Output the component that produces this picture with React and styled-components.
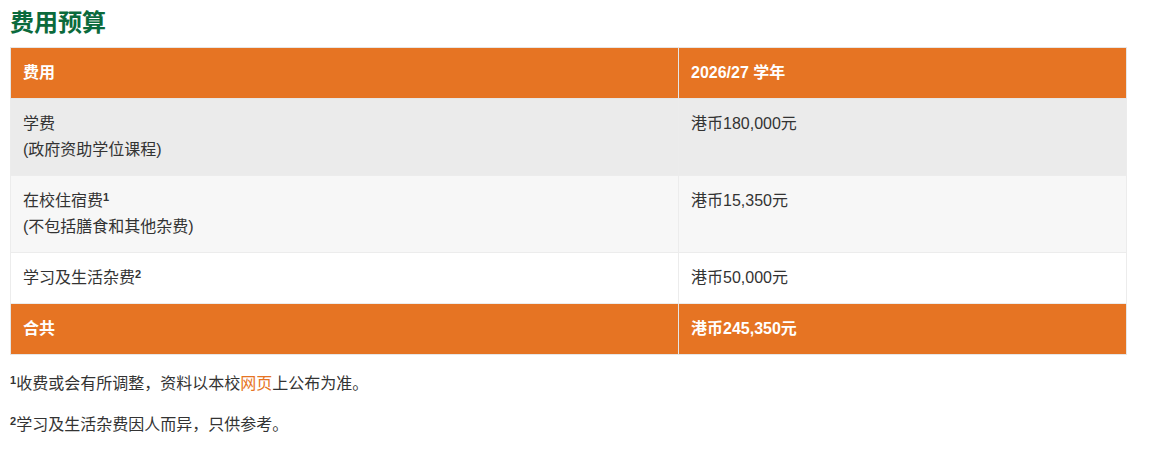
import React from "react";
import styled, { createGlobalStyle } from "styled-components";

const GlobalStyle = createGlobalStyle`
  body {
    margin: 0;
    background: #fff;
    font-family: "Liberation Sans", "Noto Sans CJK SC", sans-serif;
    color: #333;
  }
`;

const Page = styled.div`
  padding: 6px 10px 0 10px;
  width: 1117px;
`;

const Title = styled.h2`
  margin: 0 0 7px 0;
  font-size: 24px;
  line-height: 34px;
  font-weight: 700;
  color: #0b6a3c;
`;

const Table = styled.table`
  width: 100%;
  border-collapse: collapse;
  border: 1px solid #e6e6e6;
  font-size: 16px;
  line-height: 26px;
`;

const Row = styled.tr`
  background: ${(p) => p.$bg || "#fff"};
`;

const HeadCell = styled.td`
  background: #e67423;
  color: #fff;
  font-weight: 700;
  padding: 12px;
  border: 1px solid #e6e6e6;
  border-left-color: #fff;
  vertical-align: top;
  &:first-child {
    width: 643px;
    border-left-color: #e6e6e6;
  }
`;

const Cell = styled.td`
  padding: 12px;
  border: 1px solid #ececec;
  vertical-align: top;
  &:first-child {
    width: 643px;
  }
`;

const Line = styled.span`
  display: block;
  height: 26px;
  white-space: nowrap;
`;

const Sup = styled.sup`
  font-size: 11px;
  font-weight: 700;
  line-height: 0;
  vertical-align: 5px;
`;

const Notes = styled.div`
  padding-top: 16px;
  font-size: 16px;
  line-height: 26px;
`;

const Note = styled.p`
  margin: 0 0 15px 0;
  height: 26px;
`;

const Link = styled.a`
  color: #e67423;
  text-decoration: none;
`;

const rows = [
  { bg: "#ebebeb", name: "学费", sub: "(政府资助学位课程)", amount: "港币180,000元" },
  { bg: "#f7f7f7", name: "在校住宿费", mark: "1", sub: "(不包括膳食和其他杂费)", amount: "港币15,350元" },
  { bg: "#ffffff", name: "学习及生活杂费", mark: "2", amount: "港币50,000元" },
];

export default function App() {
  return (
    <Page>
      <GlobalStyle />
      <Title>费用预算</Title>
      <Table>
        <tbody>
          <Row>
            <HeadCell><Line>费用</Line></HeadCell>
            <HeadCell><Line>2026/27 学年</Line></HeadCell>
          </Row>
          {rows.map((r) => (
            <Row key={r.name} $bg={r.bg}>
              <Cell>
                <Line>
                  {r.name}
                  {r.mark && <Sup>{r.mark}</Sup>}
                </Line>
                {r.sub && <Line>{r.sub}</Line>}
              </Cell>
              <Cell><Line>{r.amount}</Line></Cell>
            </Row>
          ))}
          <Row>
            <HeadCell><Line>合共</Line></HeadCell>
            <HeadCell><Line>港币245,350元</Line></HeadCell>
          </Row>
        </tbody>
      </Table>
      <Notes>
        <Note>
          <Sup>1</Sup>收费或会有所调整，资料以本校<Link href="#">网页</Link>上公布为准。
        </Note>
        <Note>
          <Sup>2</Sup>学习及生活杂费因人而异，只供参考。
        </Note>
      </Notes>
    </Page>
  );
}
